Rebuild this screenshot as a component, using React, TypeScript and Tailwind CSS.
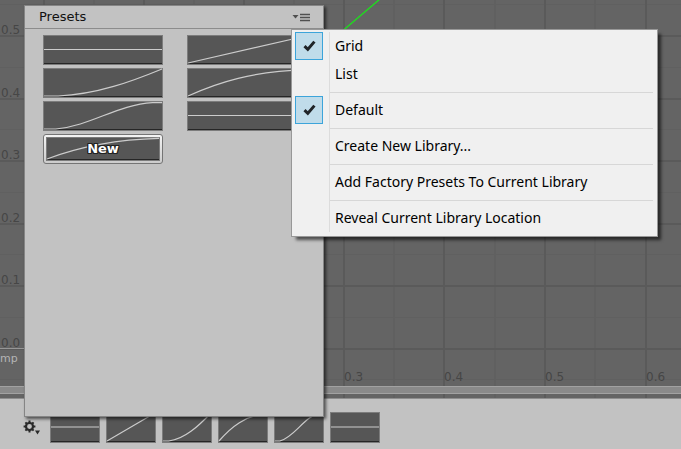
import React from "react";

type Curve = "flat" | "linear" | "easeIn" | "easeOut" | "easeInOut";

const CURVES: Record<Curve, string> = {
  flat: "M0 50 H100",
  linear: "M0 100 L100 0",
  easeIn: "M0 100 H12 C45 94 75 45 100 0",
  easeOut: "M0 100 C25 50 55 8 100 2",
  easeInOut: "M0 100 H10 C40 88 62 10 92 2 H100",
};

function Tile({ curve }: { curve: Curve }) {
  return (
    <span className="block h-full w-full border border-[#7c7c7c] bg-[#565656]">
      <span className="block h-full w-full border-b border-[#262626]">
        <svg
          className="block h-full w-full overflow-visible"
          viewBox="0 0 100 100"
          preserveAspectRatio="none"
          aria-hidden="true"
        >
          <path d={CURVES[curve]} fill="none" stroke="#cccccc" strokeWidth="1.2" vectorEffect="non-scaling-stroke" />
        </svg>
      </span>
    </span>
  );
}

const MAJOR_X = [43, 143, 243, 343, 443, 544, 645];
const MINOR_X = [93, 193, 293, 393, 494, 594];
const MAJOR_Y = [35, 98, 160, 223, 285, 348];
const MINOR_Y = [4, 67, 129, 192, 254, 317, 379];

function Graph() {
  return (
    <svg
      className="absolute inset-0 h-full w-full font-['DejaVu_Sans',sans-serif] text-xs"
      role="img"
      aria-label="Curve graph"
    >
      {MINOR_X.map((x) => (
        <rect key={x} x={x} y="0" width="2" height="100%" fill="#606060" />
      ))}
      {MINOR_Y.map((y) => (
        <rect key={y} x="0" y={y} width="100%" height="1" fill="#606060" />
      ))}
      {MAJOR_X.map((x) => (
        <rect key={x} x={x} y="0" width="2" height="100%" fill="#5a5a5a" />
      ))}
      {MAJOR_Y.map((y) => (
        <rect key={y} x="0" y={y} width="100%" height="2" fill="#5a5a5a" />
      ))}
      <path d="M0 348.5 H43" stroke="#969696" strokeWidth="1" />
      <path d="M343 30.5 L380 -1" stroke="#1fdc1f" strokeWidth="1.4" />
      {["0.5", "0.4", "0.3", "0.2", "0.1", "0.0"].map((label, i) => (
        <text key={label} x="1" y={MAJOR_Y[i] - 1} fill="#464646">
          {label}
        </text>
      ))}
      {["0.3", "0.4", "0.5", "0.6"].map((label, i) => (
        <text key={label} x={MAJOR_X[i + 3] + 1} y="381" fill="#464646">
          {label}
        </text>
      ))}
      <text x="0" y="362" fill="#b4b4b4" className="text-[11px]">
        mp
      </text>
    </svg>
  );
}

function CheckIcon() {
  return (
    <svg width="13" height="12" viewBox="0 0 13 12" aria-hidden="true">
      <path d="M1.5 6.2 L4.8 9.4 L11.4 1.6" fill="none" stroke="#202428" strokeWidth="3" />
    </svg>
  );
}

function MenuItem({ label, checked }: { label: string; checked?: boolean }) {
  return (
    <button
      type="button"
      role={checked === undefined ? "menuitem" : "menuitemcheckbox"}
      aria-checked={checked}
      className="flex h-7 w-full items-center text-left"
    >
      <span
        className={
          checked
            ? "flex h-7 w-7 shrink-0 items-center justify-center border border-[#3ca4da] bg-[#c0dcea]"
            : "h-7 w-7 shrink-0"
        }
      >
        {checked && <CheckIcon />}
      </span>
      <span className="ml-1.5 flex h-full flex-1 items-center border-l border-[#dcdcdc] pl-[5px] whitespace-nowrap">
        {label}
      </span>
    </button>
  );
}

function Separator() {
  return (
    <div role="separator" className="ml-[34px] flex h-2 items-center border-l border-[#dcdcdc]">
      <span className="mr-px h-px flex-1 bg-[#d7d7d7]" />
    </div>
  );
}

function OptionsMenu() {
  return (
    <div
      role="menu"
      aria-label="Preset options"
      className="absolute top-[29px] left-[291px] w-[367px] border border-[#989898] bg-[#f0f0f0] px-[3px] pt-[2px] pb-1 font-['Noto_Sans','Open_Sans',sans-serif] text-sm text-black shadow-[4px_4px_3px_-1px_rgba(0,0,0,0.6)]"
    >
      <MenuItem label="Grid" checked />
      <MenuItem label="List" checked={false} />
      <Separator />
      <MenuItem label="Default" checked />
      <Separator />
      <MenuItem label="Create New Library..." />
      <Separator />
      <MenuItem label="Add Factory Presets To Current Library" />
      <Separator />
      <MenuItem label="Reveal Current Library Location" />
    </div>
  );
}

const PRESETS: Curve[] = ["flat", "linear", "easeIn", "easeOut", "easeInOut", "flat"];

function PresetsPanel() {
  return (
    <section className="absolute top-[5px] left-6 flex h-[412px] w-[300px] flex-col border border-[#858585] bg-[#c2c2c2] shadow-[2px_2px_3px_rgba(0,0,0,0.6)]">
      <header className="flex h-[23px] items-center justify-between border-b border-[#8c8c8c] pr-3 pl-[14px]">
        <h2 className="font-['DejaVu_Sans',sans-serif] text-[13px] leading-4 text-[#111]">Presets</h2>
        <button type="button" aria-label="Panel options">
          <svg className="block" width="19" height="9" viewBox="0 0 19 9" aria-hidden="true">
            <path d="M0.5 2 H6.5 L3.5 5.5 Z" fill="#505050" />
            <path d="M8 1.5 H18 M8 4.5 H18 M8 7.5 H18" stroke="#505050" strokeWidth="1.4" />
          </svg>
        </button>
      </header>
      <div className="grid grid-cols-[120px_120px] gap-x-6 gap-y-[3px] px-[18px] pt-1.5">
        {PRESETS.map((curve, i) => (
          <button key={i} type="button" aria-label={`${curve} preset`} className="h-[30px]">
            <Tile curve={curve} />
          </button>
        ))}
        <button
          type="button"
          className="relative h-[30px] rounded-[3px] border border-[#757575] bg-linear-to-b from-[#f4f4f4] to-[#cccccc] p-[2px]"
        >
          <Tile curve="easeOut" />
          <span className="absolute inset-0 flex items-center justify-center font-['DejaVu_Sans',sans-serif] text-[13px] font-bold text-white [text-shadow:1px_0_#222,-1px_0_#222,0_1px_#222,0_-1px_#222,1px_1px_#222,-1px_-1px_#222,1px_-1px_#222,-1px_1px_#222]">
            New
          </span>
        </button>
      </div>
    </section>
  );
}

function GearIcon() {
  return (
    <svg className="block" width="18" height="15" viewBox="0 0 18 15" aria-hidden="true">
      <circle cx="6.5" cy="6.5" r="3.5" fill="none" stroke="#2a2a2a" strokeWidth="2.2" />
      <path
        d="M6.5 3V0.6 M6.5 10V12.4 M3 6.5H0.6 M10 6.5H12.4 M4 4L2.4 2.4 M9 4L10.6 2.4 M4 9L2.4 10.6 M9 9L10.6 10.6"
        stroke="#2a2a2a"
        strokeWidth="2"
      />
      <path d="M12 10.5 H17 L14.5 14.5 Z" fill="#2a2a2a" />
    </svg>
  );
}

export default function App() {
  return (
    <div className="relative flex min-h-screen flex-col overflow-hidden bg-[#c2c2c2]">
      <main className="relative flex flex-1 flex-col justify-end bg-[#646464] pb-1">
        <Graph />
        <div className="relative h-2 border-y border-[#a2a2a2] bg-[#8a8a8a]" />
      </main>
      <footer className="flex h-[51px] items-start border-t border-[#8e8e8e] pt-[13px] pl-[23px]">
        <button type="button" aria-label="Curve settings" className="mt-2">
          <GearIcon />
        </button>
        <div className="ml-[9px] flex gap-1.5">
          {PRESETS.map((curve, i) => (
            <button key={i} type="button" aria-label={`Apply ${curve} curve`} className="h-[31px] w-[50px]">
              <Tile curve={curve} />
            </button>
          ))}
        </div>
      </footer>
      <PresetsPanel />
      <OptionsMenu />
    </div>
  );
}
